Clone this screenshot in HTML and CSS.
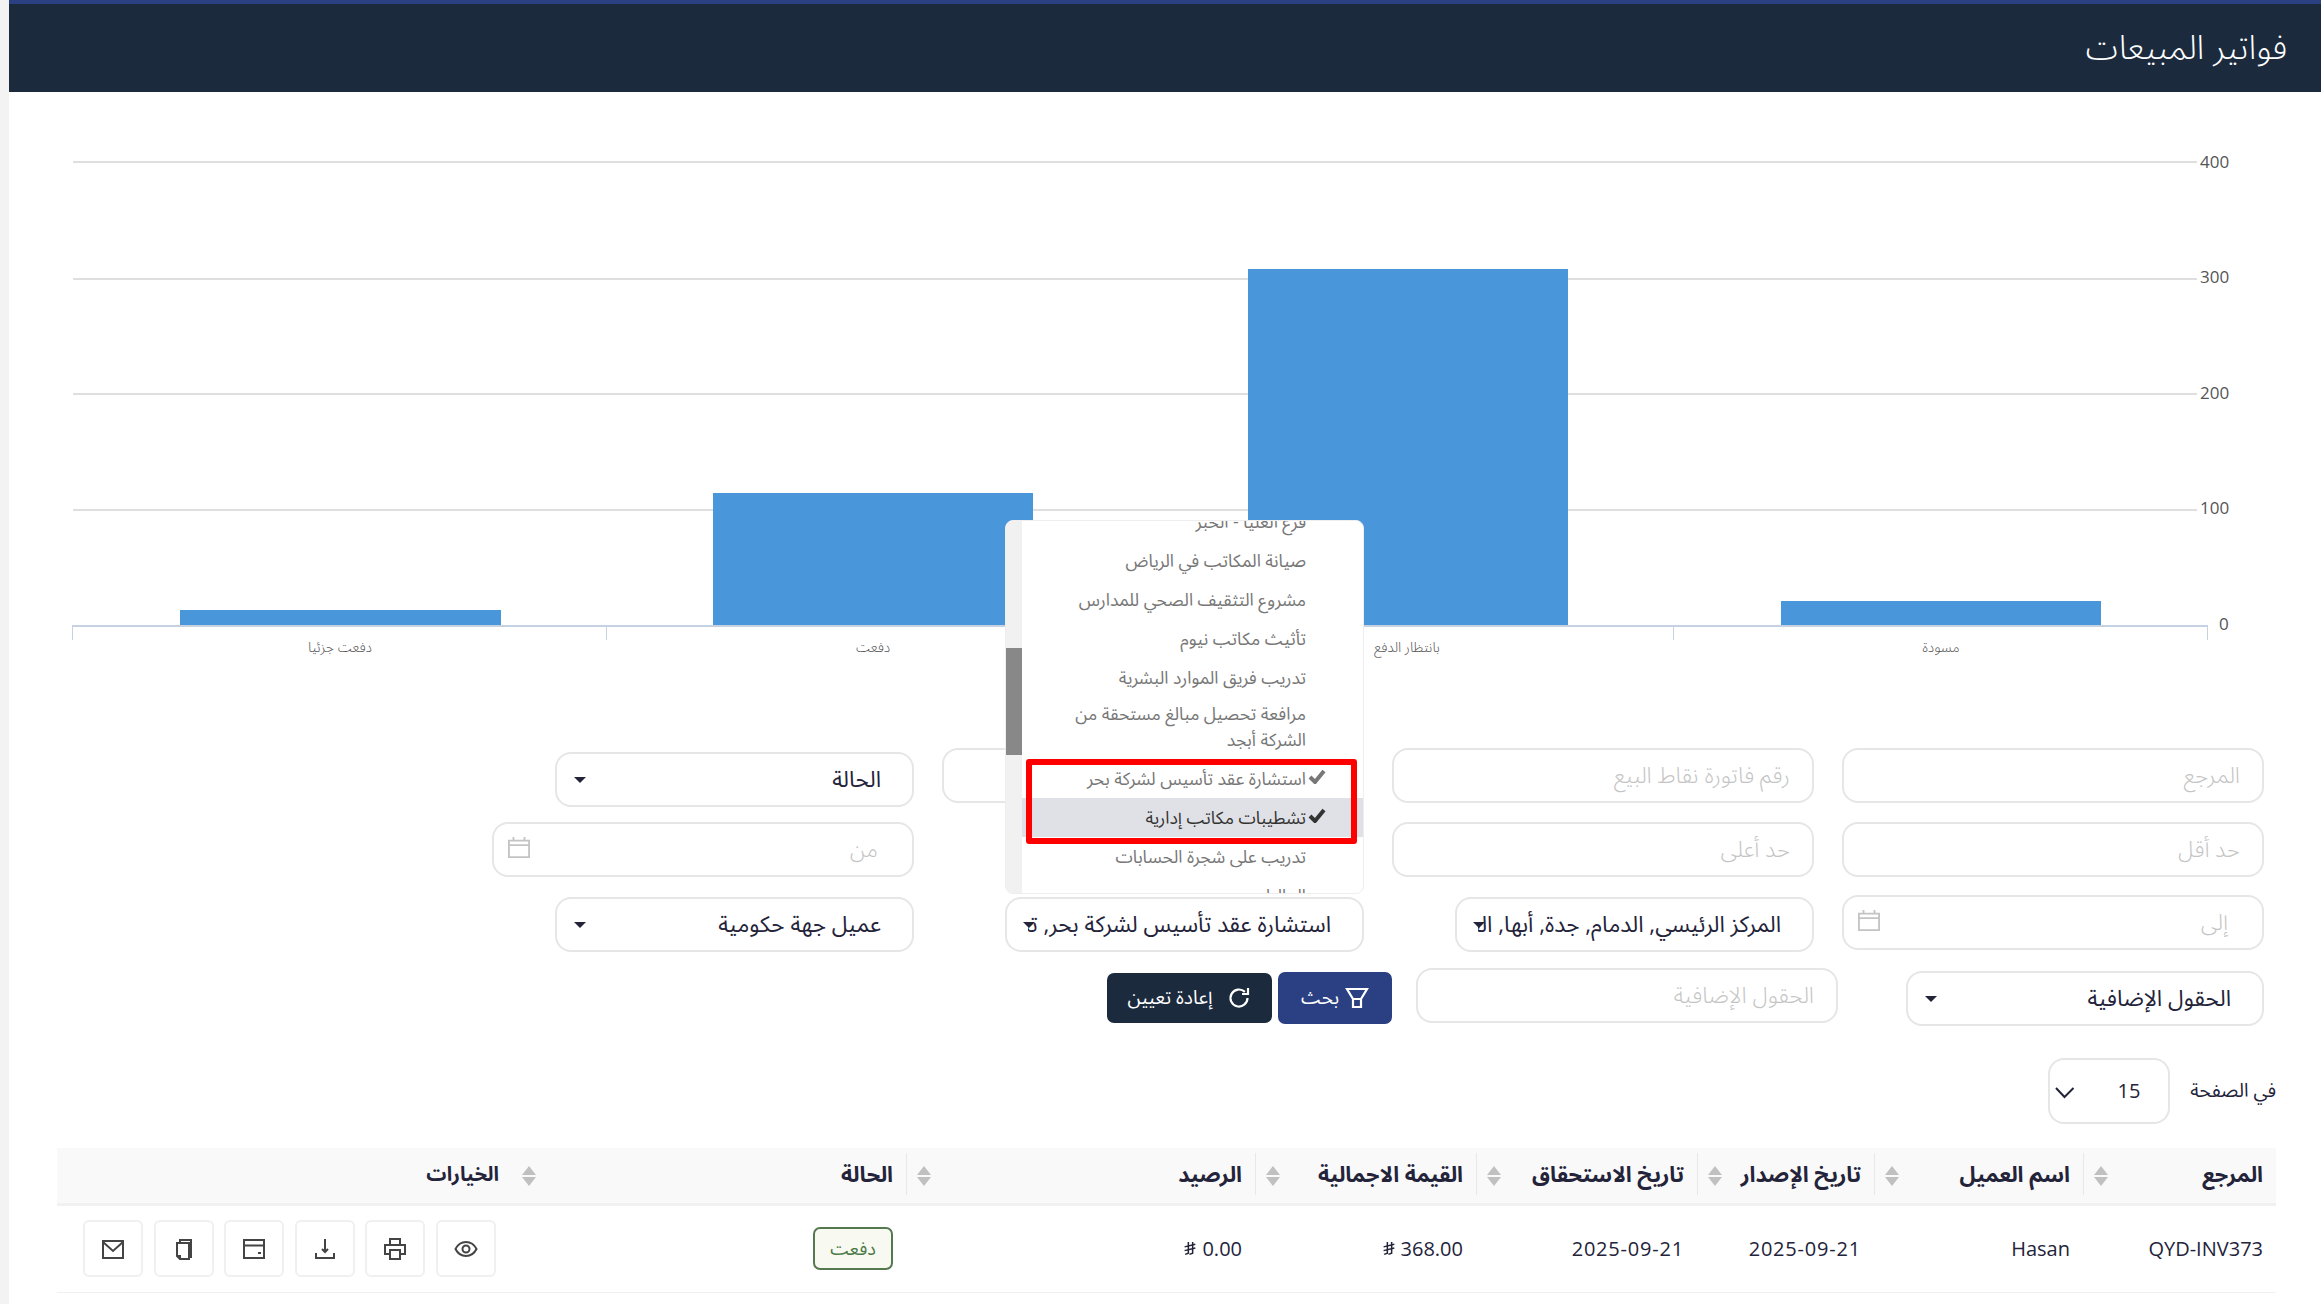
FILE: index.html
```html
<!DOCTYPE html>
<html lang="ar" dir="rtl">
<head>
<meta charset="utf-8">
<title>فواتير المبيعات</title>
<link rel="stylesheet" href="styles.css">
</head>
<body>
<div class="page">
  <header class="topbar"><h1 class="title">فواتير المبيعات</h1></header>

  <section class="chart-wrap">
    <svg class="chart" width="2312" height="570" viewBox="9 92 2312 570" xmlns="http://www.w3.org/2000/svg">
      <g class="grid">
        <line x1="73" x2="2197" y1="162" y2="162"/>
        <line x1="73" x2="2197" y1="279" y2="279"/>
        <line x1="73" x2="2197" y1="394" y2="394"/>
        <line x1="73" x2="2197" y1="510" y2="510"/>
      </g>
      <g class="bars">
        <rect x="180" y="610" width="321" height="15"/>
        <rect x="713" y="493" width="320" height="132"/>
        <rect x="1248" y="269" width="320" height="356"/>
        <rect x="1781" y="601" width="320" height="24"/>
      </g>
      <g class="axis">
        <line x1="72" x2="2208" y1="626" y2="626"/>
        <line x1="72.5" x2="72.5" y1="626" y2="640"/>
        <line x1="606.5" x2="606.5" y1="626" y2="640"/>
        <line x1="1140.5" x2="1140.5" y1="626" y2="640"/>
        <line x1="1673.5" x2="1673.5" y1="626" y2="640"/>
        <line x1="2207.5" x2="2207.5" y1="626" y2="640"/>
      </g>
      <g class="ylabels">
        <text x="2200" y="168">400</text>
        <text x="2200" y="283">300</text>
        <text x="2200" y="399">200</text>
        <text x="2200" y="514">100</text>
        <text x="2219" y="630">0</text>
      </g>
      <g class="xlabels">
        <text x="340" y="652">دفعت جزئيا</text>
        <text x="873" y="652">دفعت</text>
        <text x="1407" y="652">بانتظار الدفع</text>
        <text x="1941" y="652">مسودة</text>
      </g>
    </svg>
  </section>

  <section class="filters">
    <div class="frow">
      <div class="field input ph">المرجع</div>
      <div class="field input ph">رقم فاتورة نقاط البيع</div>
      <div class="field input ph">&nbsp;</div>
      <div class="field select low">الحالة<span class="caret"></span></div>
    </div>
    <div class="frow">
      <div class="field input ph">حد أقل</div>
      <div class="field input ph">حد أعلى</div>
      <div class="empty"></div>
      <div class="field input ph date-in">من
        <svg class="cal" viewBox="0 0 24 24"><path d="M1 5h22v18H1zM1 10h22M6 1v4M18 1v4"/></svg>
      </div>
    </div>
    <div class="frow">
      <div class="field input ph date-in up">إلى
        <svg class="cal" viewBox="0 0 24 24"><path d="M1 5h22v18H1zM1 10h22M6 1v4M18 1v4"/></svg>
      </div>
      <div class="field select down"><span class="clip">المركز الرئيسي, الدمام, جدة, أبها, الخبر</span><span class="caret over"></span></div>
      <div class="field select down anchor">
        <span class="clip">استشارة عقد تأسيس لشركة بحر, تشطيبات مكاتب إدارية</span><span class="caret over"></span>
        <div class="menu">
          <ul class="menu-list">
            <li>فرع العليا - الخبر</li>
            <li>صيانة المكاتب في الرياض</li>
            <li>مشروع التثقيف الصحي للمدارس</li>
            <li>تأثيث مكاتب نيوم</li>
            <li>تدريب فريق الموارد البشرية</li>
            <li class="two">مرافعة تحصيل مبالغ مستحقة من الشركة أبجد</li>
            <li class="sel"><svg class="tick" viewBox="0 0 18 16"><path d="M2 9l5 5L16 3"/></svg>استشارة عقد تأسيس لشركة بحر</li>
            <li class="sel hot"><svg class="tick" viewBox="0 0 18 16"><path d="M2 9l5 5L16 3"/></svg>تشطيبات مكاتب إدارية</li>
            <li>تدريب على شجرة الحسابات</li>
            <li>الماليات</li>
          </ul>
          <div class="menu-bar"><span class="menu-thumb"></span></div>
          <div class="redbox"></div>
        </div>
      </div>
      <div class="field select down">عميل جهة حكومية<span class="caret"></span></div>
    </div>
    <div class="frow last">
      <div class="field select extra">الحقول الإضافية<span class="caret"></span></div>
      <div class="field input ph extra-in">الحقول الإضافية</div>
      <button class="btn btn-search" type="button">
        <svg class="bicon" viewBox="0 0 24 24"><path d="M2 3h20l-6 10v8H8v-8zM8 13h8"/></svg>بحث
      </button>
      <button class="btn btn-reset" type="button">
        <svg class="bicon" viewBox="0 0 24 24"><path d="M20.500 12a8.500 8.500 0 1 1-2.600-6.100M21 2v6h-6"/></svg>إعادة تعيين
      </button>
    </div>
  </section>

  <div class="perpage">
    <span class="pp-label">في الصفحة</span>
    <div class="pp-select">15
      <svg class="pp-chev" viewBox="0 0 20 12"><path d="M1 1l8.500 9L18.500 1"/></svg>
    </div>
  </div>

  <table class="tbl">
    <colgroup>
      <col class="c1"><col class="c2"><col class="c3"><col class="c4"><col class="c5"><col class="c6"><col class="c7"><col class="c8">
    </colgroup>
    <thead>
      <tr>
        <th>المرجع<span class="sort"></span></th>
        <th>اسم العميل<span class="sort"></span></th>
        <th>تاريخ الإصدار<span class="sort"></span></th>
        <th>تاريخ الاستحقاق<span class="sort"></span></th>
        <th>القيمة الاجمالية<span class="sort"></span></th>
        <th>الرصيد<span class="sort"></span></th>
        <th class="nodiv">الحالة<span class="sort"></span></th>
        <th class="nodiv th-opt">الخيارات</th>
      </tr>
    </thead>
    <tbody>
      <tr>
        <td>QYD-INV373</td>
        <td>Hasan</td>
        <td class="date">2025-09-21</td>
        <td class="date">2025-09-21</td>
        <td><span class="money">368.00<svg class="sar" viewBox="0 0 12 14"><path d="M4 1v10.500l-3 1M8 1v10.500l-3 1M.5 5.500l10-2.500M.5 9l10-2.500"/></svg></span></td>
        <td><span class="money">0.00<svg class="sar" viewBox="0 0 12 14"><path d="M4 1v10.500l-3 1M8 1v10.500l-3 1M.5 5.500l10-2.500M.5 9l10-2.500"/></svg></span></td>
        <td><span class="badge">دفعت</span></td>
        <td>
          <div class="actions">
            <span class="act"><svg viewBox="0 0 24 24"><path d="M1.500 12C4 7 8 5 12 5s8 2 10.500 7c-2.500 5-6.500 7-10.500 7s-8-2-10.500-7z"/><circle cx="12" cy="12" r="3.500"/></svg></span>
            <span class="act"><svg viewBox="0 0 24 24"><path d="M7 8V2h10v6M7 17H2V8h20v9h-5M7 13h10v9H7z"/></svg></span>
            <span class="act"><svg viewBox="0 0 24 24"><path d="M12 2v13M9 12l3 3 3-3M3 16v5h18v-5"/></svg></span>
            <span class="act"><svg viewBox="0 0 24 24"><path d="M2 3h20v18H2zM2 8.500h20M16 16h3"/></svg></span>
            <span class="act"><svg viewBox="0 0 24 24"><path d="M5 6h12v16H8l-3-3zM8 22v-3H5M8 6V3h11v17h-2"/></svg></span>
            <span class="act"><svg viewBox="0 0 24 24"><path d="M2 4h20v17H2zM2 5l10 9 10-9"/></svg></span>
          </div>
        </td>
      </tr>
    </tbody>
  </table>
</div>
</body>
</html>
```
FILE: styles.css
```css
* { box-sizing: border-box; }
html, body { margin: 0; padding: 0; height: 100%; overflow: hidden; background: #f3f3f3; }
body { font-family: "Open Sans", "Noto Sans Arabic", "DejaVu Sans", sans-serif; color: #23233a; }
.page { margin-left: 9px; background: #fff; height: 1304px; overflow: hidden; }

.topbar { height: 92px; background: #1b2a3d; border-top: 4px solid #2b4083; padding-right: 34px; display: flex; align-items: center; }
.title { margin: 0; font-size: 33.700px; font-weight: 300; color: #fff; }

.chart-wrap { height: 570px; direction: ltr; }
.chart { display: block; }
.grid line { stroke: #dfdfdf; stroke-width: 2; }
.bars rect { fill: #4a96da; }
.axis line { stroke: #c6d2e2; stroke-width: 1; }
.axis line:first-child { stroke-width: 2; }
.ylabels text { font-size: 17px; fill: #555; }
.xlabels text { font-size: 14px; font-weight: 300; fill: #555; text-anchor: middle; direction: rtl; }

.filters { padding-top: 86px; padding-right: 57px; position: relative; }
.frow { display: grid; grid-template-columns: repeat(4, 422px); column-gap: 28px; height: 74px; }
.frow.last { display: flex; column-gap: 0; height: 58px; margin-top: -2px; align-items: flex-start; }

.field { height: 55px; border: 2px solid #e6e6e6; border-radius: 16px; background: #fff; display: flex; align-items: center; padding: 0 22px; font-size: 22.500px; position: relative; white-space: nowrap; }
.ph { color: #c4c4c4; font-weight: 300; }
.select { padding: 0 31px 0 17px; justify-content: space-between; color: #23233a; margin-left: 63px; }
.low { margin-top: 4px; }
.down { margin-top: 1px; }
.up { margin-top: -1px; }
.date-in { justify-content: space-between; padding-right: 34px; padding-left: 14px; }
.cal { width: 22px; height: 24px; fill: none; stroke: #c4c4c4; stroke-width: 2; margin-top: -6px; }
.clip { display: block; width: 303px; overflow: hidden; white-space: nowrap; }
.caret { width: 0; height: 0; border-left: 6px solid transparent; border-right: 6px solid transparent; border-top: 6px solid #23233a; }
.caret.over { position: absolute; left: 16px; top: 23px; }

.extra { width: 358px; flex: none; margin: 3px 0 0 0; }
.extra-in { width: 422px; flex: none; margin: 0 68px 0 0; }
.btn { height: 52px; border: 0; border-radius: 7px; color: #fff; display: flex; align-items: center; justify-content: center; gap: 6px; font-family: inherit; font-size: 19px; padding: 0; margin-top: 4px; }
.btn-search { width: 114px; background: #2b4083; margin-right: 24px; }
.btn-reset { width: 165px; height: 50px; margin-top: 5px; margin-right: 6px; background: #1b2a3d; gap: 15px; }
.bicon { width: 24px; height: 24px; fill: none; stroke: #fff; stroke-width: 2.200; }

.anchor { position: relative; z-index: 5; }
.menu { position: absolute; right: -2px; left: -2px; bottom: calc(100% + 5px); height: 374px; background: #fff; border: 1px solid #eee; border-radius: 8px; overflow: hidden; z-index: 10; display: flex; }
.menu-list { list-style: none; margin: -19px 0 0; padding: 0; flex: 1; font-size: 17.500px; color: #777; white-space: normal; }
.menu-list li { min-height: 39px; line-height: 39px; padding: 0 57px 0 32px; position: relative; }
.menu-list li.two { line-height: 26px; padding-top: 3px; height: 60px; margin-bottom: 2px; }
.menu-list .hot { background: #e0e1e6; color: #333; }
.tick { position: absolute; right: 37px; top: 9px; width: 18px; height: 16px; fill: none; stroke: currentColor; stroke-width: 4; }
.menu-bar { width: 16px; flex: none; background: #f1f1f1; position: relative; }
.menu-thumb { position: absolute; top: 127px; left: 0; right: 0; height: 107px; background: #888; }
.redbox { position: absolute; left: 20px; width: 331px; top: 238px; height: 85px; border: 6px solid #f00; border-radius: 3px; }

.perpage { display: flex; align-items: center; padding-right: 45px; gap: 20px; height: 66px; margin-top: 32px; }
.pp-label { font-size: 19px; }
.pp-select { width: 122px; height: 66px; border: 2px solid #e6e6e6; border-radius: 16px; position: relative; font-size: 20px; padding: 17px 28px 0 0; }
.pp-chev { position: absolute; left: 5px; top: 27px; width: 20px; height: 12px; fill: none; stroke: #23233a; stroke-width: 2; }

.tbl { position: absolute; top: 1148px; right: 45px; width: 2219px; border-collapse: collapse; table-layout: fixed; }
.c1 { width: 193px; } .c2 { width: 209px; } .c3 { width: 177px; } .c4 { width: 221px; } .c5 { width: 221px; } .c6 { width: 349px; } .c7 { width: 395px; } .c8 { width: 454px; }
.tbl th { height: 56px; background: #f9f9f9; border-bottom: 3px solid #f1f1f1; text-align: right; padding: 0 13px; font-size: 21.700px; font-weight: 700; position: relative; }
.tbl th::after { content: ""; position: absolute; left: 0; top: 5px; bottom: 8px; border-left: 1px solid #e8e8e8; }
.tbl th.nodiv::after { display: none; }
.tbl .th-opt { font-size: 20px; padding-right: 12px; }
.sort { position: absolute; left: 11px; top: 18px; width: 14px; height: 20px; }
.sort::before, .sort::after { content: ""; position: absolute; left: 0; border-left: 7px solid transparent; border-right: 7px solid transparent; }
.sort::before { top: 0; border-bottom: 9px solid #c0c0c0; }
.sort::after { bottom: 0; border-top: 9px solid #c0c0c0; }
.tbl td { height: 88px; border-bottom: 1px solid #f0f0f0; text-align: right; padding: 0 13px; font-size: 20px; }
.tbl .date { letter-spacing: .8px; }
.money { display: inline-flex; align-items: center; gap: 5px; }
.sar { width: 13px; height: 15px; fill: none; stroke: #23233a; stroke-width: 1.400; }
.badge { display: inline-flex; align-items: center; justify-content: center; width: 80px; height: 43px; background: #f8f9f1; border: 2px solid #55794f; border-radius: 7px; color: #4a7a46; font-size: 18px; }
.actions { display: flex; gap: 10.600px; padding-right: 2px; }
.act { width: 60px; height: 57px; border: 2px solid #f0f0f0; border-radius: 6px; display: flex; align-items: center; justify-content: center; }
.act svg { width: 24px; height: 24px; fill: none; stroke: #444; stroke-width: 2; }
```
